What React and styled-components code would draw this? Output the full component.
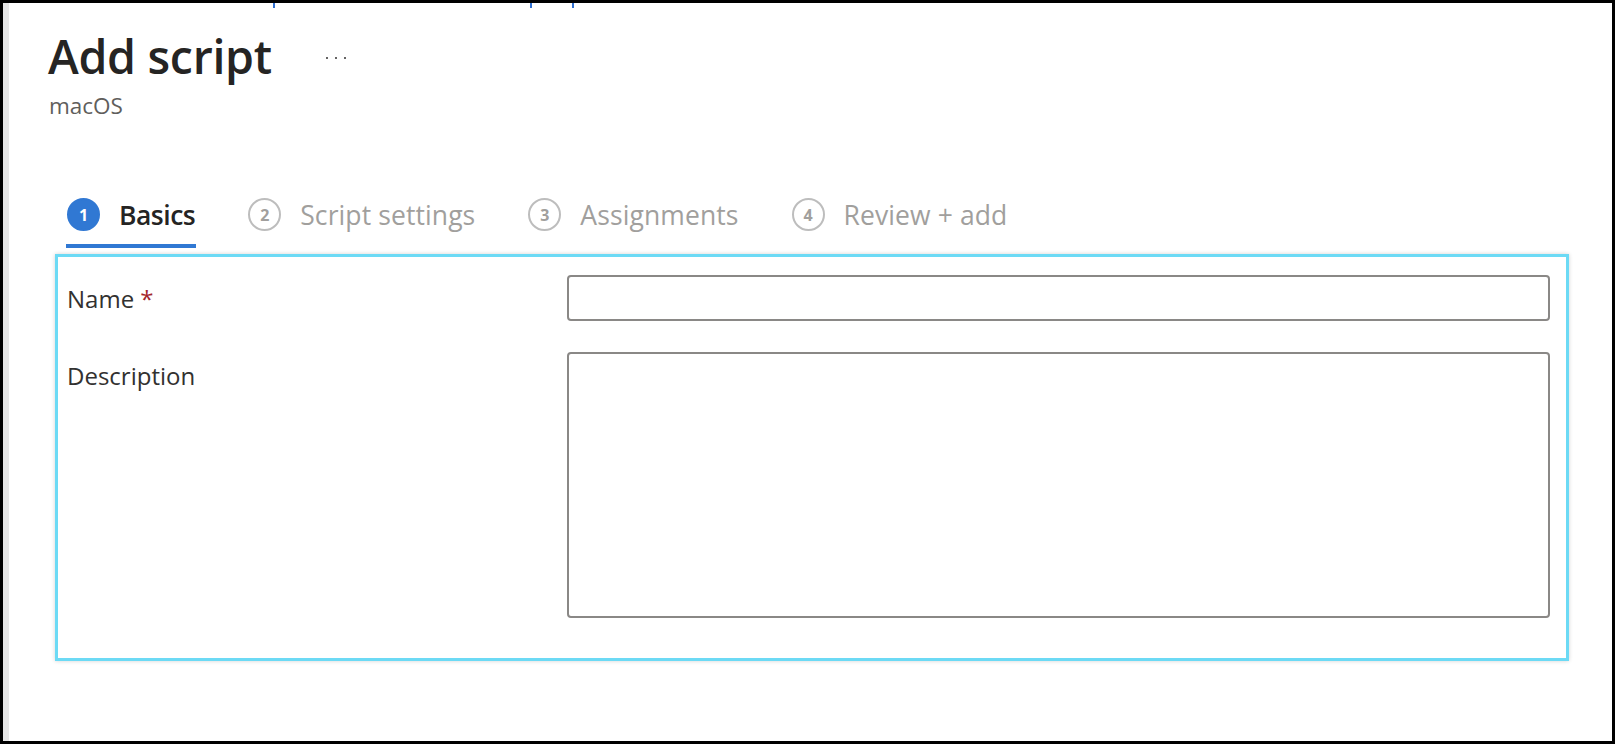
import React from 'react'
import styled, { createGlobalStyle } from 'styled-components'

const GlobalStyle = createGlobalStyle`
  html, body {
    margin: 0;
    padding: 0;
    background: #ffffff;
  }
  body {
    font-family: "Open Sans", "Noto Sans", "Liberation Sans", sans-serif;
    color: #323130;
  }
`

const steps = [
  { n: 1, label: 'Basics' },
  { n: 2, label: 'Script settings' },
  { n: 3, label: 'Assignments' },
  { n: 4, label: 'Review + add' },
]

const App = () => {
  return (
    <>
      <GlobalStyle />
      <Frame>
        <Gutter />
        <Content>
          <Crumbs>
            <Tick $left={264} />
            <Tick $left={255} />
            <Tick $left={40} />
          </Crumbs>
          <Header>
            <Title>Add script</Title>
            <More>
              <Dot />
              <Dot />
              <Dot />
            </More>
          </Header>
          <Subtitle>macOS</Subtitle>
          <Tabs>
            {steps.map((s, i) => (
              <Tab key={s.n} $active={i === 0}>
                <Circle $active={i === 0}>{s.n}</Circle>
                <TabLabel $active={i === 0}>{s.label}</TabLabel>
              </Tab>
            ))}
          </Tabs>
          <Panel>
            <Row>
              <Label>
                Name <Star>*</Star>
              </Label>
              <Input type="text" />
            </Row>
            <Row>
              <Label>Description</Label>
              <TextArea />
            </Row>
          </Panel>
        </Content>
      </Frame>
    </>
  )
}

const Frame = styled.div`
  box-sizing: border-box;
  height: 744px;
  border: 3px solid #000;
  display: flex;
`

const Gutter = styled.div`
  width: 6px;
  background: #e6e6e6;
  flex-shrink: 0;
`

const Content = styled.div`
  flex: 1;
  display: flex;
  flex-direction: column;
`

const Crumbs = styled.div`
  height: 6px;
  display: flex;
`

const Tick = styled.span`
  width: 2px;
  height: 5px;
  background: #2f6fd0;
  margin-left: ${p => p.$left}px;
`

const Header = styled.div`
  display: flex;
  align-items: center;
  padding-left: 39px;
  margin-top: 17px;
`

const Title = styled.h1`
  margin: 0;
  font-size: 46.5px;
  font-weight: 600;
  color: #252423;
  letter-spacing: -0.3px;
  line-height: 60px;
`

const More = styled.div`
  display: flex;
  gap: 7px;
  margin-left: 54px;
  margin-top: 4px;
`

const Dot = styled.span`
  width: 2px;
  height: 2px;
  border-radius: 50%;
  background: #323130;
`

const Subtitle = styled.div`
  padding-left: 40px;
  font-size: 22.5px;
  color: #605e5c;
  line-height: 28px;
  margin-top: 6px;
`

const Tabs = styled.div`
  display: flex;
  gap: 51px;
  padding-left: 57px;
  margin-top: 78px;
`

const Tab = styled.div`
  display: flex;
  align-items: center;
  gap: 19px;
  padding: 0 1px 13px;
  border-bottom: 4px solid ${p => (p.$active ? '#3078d3' : 'transparent')};
`

const Circle = styled.span`
  box-sizing: border-box;
  width: 33px;
  height: 33px;
  border-radius: 50%;
  display: flex;
  align-items: center;
  justify-content: center;
  font-size: 16px;
  font-weight: 700;
  color: ${p => (p.$active ? '#ffffff' : '#a19f9d')};
  background: ${p => (p.$active ? '#3078d3' : 'transparent')};
  border: 2px solid ${p => (p.$active ? '#3078d3' : '#bdbdbd')};
`

const TabLabel = styled.span`
  font-size: 26.5px;
  line-height: 32px;
  font-weight: ${p => (p.$active ? 600 : 400)};
  letter-spacing: ${p => (p.$active ? '-0.5px' : '0.1px')};
  color: ${p => (p.$active ? '#252423' : '#a19f9d')};
`

const Panel = styled.div`
  box-sizing: border-box;
  margin: 6px 43px 0 46px;
  height: 407px;
  border: 3px solid #6cdaf5;
  box-shadow: 0 0 4px rgba(0, 0, 0, 0.18);
  padding: 18px 16px 0 9px;
  display: flex;
  flex-direction: column;
  gap: 29px;
`

const Row = styled.div`
  display: grid;
  grid-template-columns: 500px 1fr;
  align-items: start;
`

const Label = styled.div`
  font-size: 24px;
  line-height: 48px;
  color: #323130;
`

const Star = styled.span`
  color: #a4262c;
`

const fieldBase = `
  box-sizing: border-box;
  width: 100%;
  border: 2px solid #8a8886;
  border-radius: 4px;
  background: #fff;
  outline: none;
  font-family: inherit;
  font-size: 20px;
`

const Input = styled.input`
  ${fieldBase}
  height: 46px;
`

const TextArea = styled.textarea`
  ${fieldBase}
  height: 266px;
  resize: none;
`

export default App
